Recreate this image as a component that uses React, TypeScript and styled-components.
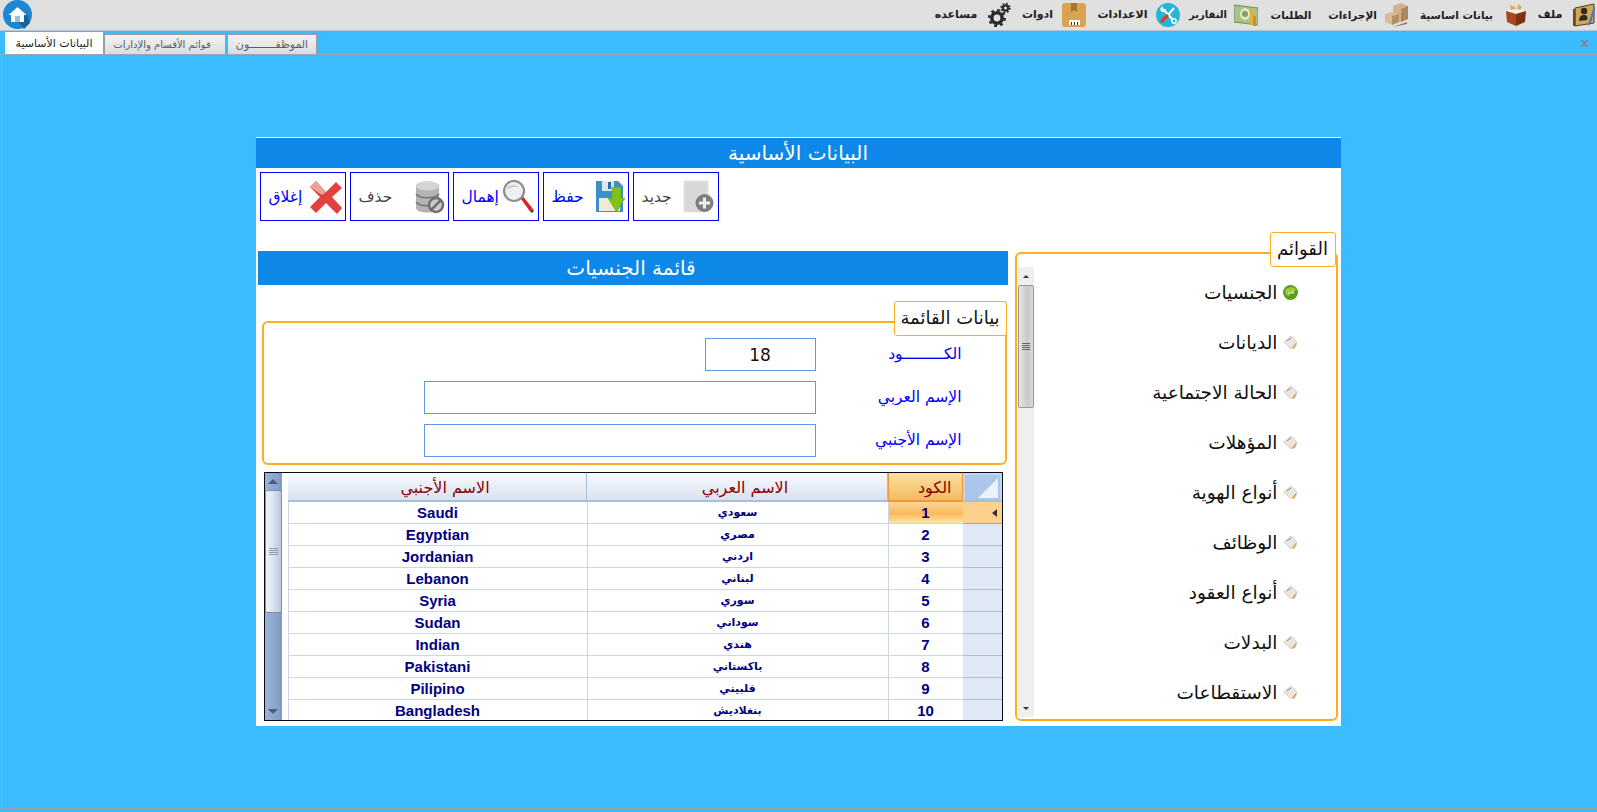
import React from 'react';
import styled, { createGlobalStyle } from 'styled-components';

const FONT = '"DejaVu Sans", "Noto Sans", sans-serif';

const GlobalStyle = createGlobalStyle`
  html, body {
    margin: 0;
    padding: 0;
    height: 100%;
    overflow: hidden;
    background: #3abcff;
    font-family: ${FONT};
  }
  * { box-sizing: border-box; }
`;

const Page = styled.div`
  width: 1597px;
  height: 812px;
  display: flex;
  flex-direction: column;
  background: #3abcff;
`;

const TopBar = styled.header`
  height: 31px;
  flex: none;
  display: flex;
  justify-content: space-between;
  align-items: center;
  padding: 0 2px 1px 3px;
  background: #e0e0e0;
  border-bottom: 1px solid #b9c6cf;
`;

const Menu = styled.nav`
  display: flex;
  direction: rtl;
  align-items: center;
`;

const MenuEntry = styled.div<{ $iconGap: number; $after: number }>`
  display: flex;
  align-items: center;
  gap: ${p => p.$iconGap}px;
  margin-left: ${p => p.$after}px;
`;

const MenuLabel = styled.span<{ $w: number; $size: number }>`
  width: ${p => p.$w}px;
  display: flex;
  justify-content: center;
  font-size: ${p => p.$size}px;
  font-weight: bold;
  color: #1c1c1c;
  white-space: nowrap;
`;

const TabRow = styled.div`
  height: 23px;
  flex: none;
  display: flex;
  align-items: flex-end;
  padding-left: 5px;
  gap: 1px;
`;

const Tab = styled.div<{ $active?: boolean; $w: number; $size: number; $pad?: number }>`
  width: ${p => p.$w}px;
  height: ${p => (p.$active ? 22 : 20)}px;
  display: flex;
  align-items: center;
  justify-content: center;
  padding-right: ${p => p.$pad ?? 0}px;
  font-size: ${p => p.$size}px;
  white-space: nowrap;
  color: ${p => (p.$active ? '#222' : '#5c5c5c')};
  background: ${p => (p.$active ? '#fff' : 'linear-gradient(#f2f2f6, #dcdce2)')};
  border: 1px solid ${p => (p.$active ? '#fff' : '#9a9aa2')};
  border-bottom: none;
`;

const CloseMark = styled.span`
  position: absolute;
  right: 8px;
  top: -19px;
  font-size: 13px;
  font-weight: bold;
  line-height: 14px;
  color: #7d8a96;
`;

const Frame = styled.main`
  position: relative;
  flex: none;
  height: 755px;
  margin-left: 1px;
  width: 1596px;
  display: flex;
  justify-content: center;
  padding-top: 82px;
  padding-right: 3px;
  border: 1px solid #9aa5ad;
  border-right: none;
`;

const Panel = styled.section`
  width: 1085px;
  height: 589px;
  background: #fff;
  display: flex;
  flex-direction: column;
  padding-top: 1px;
`;

const PanelTitle = styled.h1`
  margin: 0;
  height: 30px;
  flex: none;
  display: flex;
  align-items: center;
  justify-content: center;
  background: #0e88e8;
  color: #fff;
  font-size: 20px;
  font-weight: normal;
`;

const Toolbar = styled.div`
  display: flex;
  gap: 4px;
  padding: 4px 0 0 4px;
  flex: none;
`;

const ToolButton = styled.button<{ $w: number; $off?: boolean }>`
  width: ${p => p.$w}px;
  height: 49px;
  padding: 0 3px 0 8px;
  display: flex;
  align-items: center;
  justify-content: space-between;
  background: #fff;
  border: 1px solid #0000ff;
  font-family: ${FONT};
  font-size: 15.5px;
  font-weight: normal;
  color: ${p => (p.$off ? '#444' : '#0000ff')};
  white-space: nowrap;
`;

const Body = styled.div`
  display: flex;
  padding: 30px 3px 0 2px;
  gap: 7px;
`;

const LeftColumn = styled.div`
  width: 750px;
  display: flex;
  flex-direction: column;
`;

const SectionTitle = styled.h2`
  margin: 0;
  height: 34px;
  display: flex;
  align-items: center;
  justify-content: center;
  padding-right: 3px;
  background: #0e88e8;
  color: #fff;
  font-size: 20px;
  font-weight: normal;
`;

const GroupBox = styled.div`
  position: relative;
  border: 2px solid #ffae22;
  border-radius: 6px;
`;

const Legend = styled.div<{ $w: number; $right: number }>`
  position: absolute;
  top: -22px;
  right: ${p => p.$right}px;
  width: ${p => p.$w}px;
  height: 35px;
  display: flex;
  align-items: center;
  justify-content: center;
  padding-bottom: 2px;
  background: #fff;
  border: 1px solid #ffae22;
  border-radius: 3px;
  font-size: 18px;
  color: #111;
  white-space: nowrap;
`;

const FormBox = styled(GroupBox)`
  margin: 36px 1px 0 4px;
  height: 144px;
  direction: rtl;
  display: flex;
  flex-direction: column;
  gap: 10px;
  padding: 15px 43px 0 0;
`;

const FieldRow = styled.div`
  display: flex;
  align-items: center;
  height: 33px;
`;

const FieldLabel = styled.label`
  width: 146px;
  font-size: 15.5px;
  color: #0000ff;
  white-space: nowrap;
  margin-top: -2px;
`;

const FieldInput = styled.div<{ $w: number }>`
  width: ${p => p.$w}px;
  height: 33px;
  display: flex;
  align-items: center;
  justify-content: center;
  border: 1px solid #6495ed;
  font-size: 17px;
  color: #111;
`;

const Grid = styled.div`
  margin: 7px 5px 0 6px;
  height: 249px;
  border: 1px solid #0a0a14;
  display: flex;
  overflow: hidden;
  background: #fff;
`;

const GridScroll = styled.div`
  width: 17px;
  flex: none;
  display: flex;
  flex-direction: column;
  justify-content: space-between;
  background: linear-gradient(90deg, #9db4d6, #7f9ac3);
`;

const GridArrow = styled.div<{ $down?: boolean }>`
  height: 17px;
  flex: none;
  display: flex;
  align-items: center;
  justify-content: center;
  &::after {
    content: '';
    border-left: 5px solid transparent;
    border-right: 5px solid transparent;
    ${p => (p.$down ? 'border-top: 5px solid #4a5a80;' : 'border-bottom: 5px solid #4a5a80;')}
  }
`;

const GridThumb = styled.div`
  height: 123px;
  flex: none;
  display: flex;
  align-items: center;
  justify-content: center;
  background: linear-gradient(90deg, #eef1f7, #dfe5ef 45%, #b9c6da);
  border: 1px solid #7c8fb0;
  border-radius: 2px;
`;

const ScrollTop = styled.div`
  display: flex;
  flex-direction: column;
`;

const Grip = styled.div`
  width: 9px;
  height: 7px;
  background: repeating-linear-gradient(#8d9ab2 0 1px, transparent 1px 2px);
`;

const Gutter = styled.div`
  width: 6px;
  flex: none;
  background: #fff;
`;

const GridTable = styled.div`
  flex: 1;
  display: flex;
  flex-direction: column;
  min-width: 0;
`;

const GridRow = styled.div`
  display: grid;
  grid-template-columns: 299px 301px 75px 1fr;
  flex: none;
`;

const HeadCell = styled.div<{ $hot?: boolean }>`
  height: 29px;
  display: flex;
  align-items: flex-end;
  justify-content: ${p => (p.$hot ? 'flex-end' : 'center')};
  padding: 0 ${p => (p.$hot ? 10 : 0)}px 3px ${p => (p.$hot ? 0 : 17)}px;
  font-size: 16px;
  color: #8b0000;
  white-space: nowrap;
  background: ${p => (p.$hot ? 'linear-gradient(#fbdf9f, #f4bb61)' : 'linear-gradient(#f8fafd, #d9e2ef)')};
  border-right: 1px solid ${p => (p.$hot ? '#ef9a3a' : '#a9bfd8')};
  border-left: ${p => (p.$hot ? '1px solid #ef9a3a' : 'none')};
  border-bottom: 2px solid ${p => (p.$hot ? '#ef9a3a' : '#a9bfd8')};
`;

const CornerCell = styled.div`
  height: 29px;
  background: #aac6e8;
  border: 2px solid #c3d6ee;
  border-bottom-color: #a9bfd8;
  position: relative;
  overflow: hidden;
  &::after {
    content: '';
    position: absolute;
    right: 2px;
    bottom: 2px;
    border-left: 20px solid transparent;
    border-bottom: 20px solid #eef2f8;
  }
`;

const BodyCell = styled.div<{ $size?: number; $current?: boolean }>`
  height: 22px;
  display: flex;
  align-items: center;
  justify-content: center;
  font-size: ${p => p.$size ?? 15}px;
  font-weight: bold;
  font-family: ${p => (p.$size ? FONT : '"Liberation Sans", sans-serif')};
  color: #000080;
  border-left: 1px solid #cdd6e8;
  border-bottom: 1px solid #cdd6e8;
  background: ${p => (p.$current ? 'linear-gradient(#fbd79a, #fcb95c 55%, #fde3a8)' : '#fff')};
`;

const Indicator = styled.div<{ $current?: boolean }>`
  height: 22px;
  display: flex;
  align-items: center;
  justify-content: flex-end;
  padding-right: 5px;
  background: ${p => (p.$current ? '#fdd08c' : '#e1e8f5')};
  border-bottom: 1px solid ${p => (p.$current ? '#ef9a3a' : '#a9bfd8')};
  ${p => p.$current && `
    &::after {
      content: '';
      border-top: 4px solid transparent;
      border-bottom: 4px solid transparent;
      border-right: 5px solid #333;
    }
  `}
`;

const ListBox = styled(GroupBox)`
  width: 323px;
  height: 469px;
  margin-top: 1px;
  display: flex;
  padding: 13px 0 0 1px;
`;

const ListScroll = styled.div`
  width: 16px;
  height: 450px;
  flex: none;
  display: flex;
  flex-direction: column;
  justify-content: space-between;
  background: #efefef;
`;

const ListArrow = styled.div<{ $down?: boolean }>`
  height: 18px;
  flex: none;
  display: flex;
  align-items: center;
  justify-content: center;
  &::after {
    content: '';
    border-left: 3px solid transparent;
    border-right: 3px solid transparent;
    ${p => (p.$down ? 'border-top: 3px solid #333;' : 'border-bottom: 3px solid #333;')}
  }
`;

const ListThumb = styled.div`
  height: 123px;
  flex: none;
  display: flex;
  align-items: center;
  justify-content: center;
  background: linear-gradient(90deg, #e6e6e6, #c9c9c9 60%, #d9d9d9);
  border: 1px solid #9a9a9a;
  border-radius: 2px;
`;

const ListGrip = styled(Grip)`
  width: 8px;
  background: repeating-linear-gradient(#666 0 1px, transparent 1px 2px);
`;

const ListItems = styled.ul`
  list-style: none;
  margin: 0;
  padding: 0 38px 0 0;
  flex: 1;
  direction: rtl;
  display: flex;
  flex-direction: column;
`;

const ListItem = styled.li`
  height: 50px;
  display: flex;
  align-items: center;
  gap: 5px;
  font-size: 18.5px;
  color: #111;
  white-space: nowrap;
`;

const Svg = styled.svg`
  flex: none;
  display: block;
`;

const HomeIcon = () => (
  <Svg width="29" height="29" viewBox="0 0 29 29">
    <circle cx="14.5" cy="14.5" r="14.5" fill="#1f86d4" />
    <path d="M14 20l7 9 6-6-3-9z" fill="#17639f" />
    <path d="M14.5 7L5.5 15h2.5v7h13v-7h2.500z" fill="#fff" />
    <rect x="12" y="16" width="5" height="6" fill="#8fc4ea" />
  </Svg>
);

const AppIcon = () => (
  <Svg width="22" height="24" viewBox="0 0 22 24">
    <path d="M2 5L21 1v19L2 23z" fill="#d2a45c" stroke="#5a3a18" />
    <path d="M0 6h2.500v17H0z" fill="#6b4a22" />
    <circle cx="11" cy="8" r="3.200" fill="#33291c" />
    <path d="M6 18c0-4 2-6 5-6s4 2 3 5z" fill="#33291c" />
    <path d="M21 3l-5 16-1 4 2.500-2L22 6z" fill="#3d78d0" />
  </Svg>
);

const BasketIcon = () => (
  <Svg width="22" height="24" viewBox="0 0 22 24">
    <path d="M5 2l5 2 2 4H6z M13 1l4 3-3 4h-2z" fill="#d7ad5c" />
    <path d="M1 8l10 3 10-3-10-2z" fill="#f3eee4" />
    <path d="M1 8l10 3v12L2 19z" fill="#a8481c" />
    <path d="M21 8l-10 3v12l9-4z" fill="#7f3210" />
  </Svg>
);

const BoxesIcon = () => (
  <Svg width="25" height="24" viewBox="0 0 25 24">
    <path d="M9 3l8-3 7 3v13l-8 3-7-3z" fill="#d2b18b" />
    <path d="M17 6v13l7-3V3z" fill="#a98860" />
    <path d="M1 11l7-2 7 2v8l-7 3-7-3z" fill="#d8bb96" />
    <path d="M8 13v9l7-3v-8z" fill="#b0906a" />
    <path d="M2 21l7 3 14-5v2l-14 3z" fill="#8c7a66" />
  </Svg>
);

const MoneyIcon = () => (
  <Svg width="24" height="24" viewBox="0 0 24 24">
    <path d="M0 2l24 3v17L0 19z" fill="#a6c48a" stroke="#6e8f58" />
    <ellipse cx="11" cy="11" rx="5" ry="6" fill="#dfe9c8" />
    <circle cx="11" cy="11" r="3" fill="#7d9f63" />
    <rect x="16" y="6" width="4" height="16" fill="#e0b040" />
    <rect x="19" y="13" width="3" height="10" fill="#c8942c" />
  </Svg>
);

const ToolsIcon = () => (
  <Svg width="24" height="24" viewBox="0 0 24 24">
    <circle cx="12" cy="12" r="12" fill="#27b4d8" />
    <path d="M7 6l10 11" stroke="#fff" strokeWidth="2.200" />
    <path d="M4.500 7.500a3 3 0 0 1 3-4l-1 2 1.500 1.500 2-1a3 3 0 0 1-4 3z" fill="#fff" />
    <path d="M18 5l-6 7" stroke="#fff" strokeWidth="2" />
    <path d="M11 13l-5 5" stroke="#e23b2e" strokeWidth="3.200" strokeLinecap="round" />
    <circle cx="18" cy="18" r="2.200" fill="none" stroke="#fff" strokeWidth="1.500" />
  </Svg>
);

const PackageIcon = () => (
  <Svg width="24" height="24" viewBox="0 0 24 24">
    <rect width="24" height="24" rx="3" fill="#d9a354" />
    <path d="M9 0h6v9l-3-2-3 2z" fill="#a87632" />
    <rect x="7" y="17" width="11" height="5" fill="#fff" />
    <path d="M9 19h1v3H9zM12 19h1v3h-1zM15 19h1v3h-1z" fill="#333" />
  </Svg>
);

const GearsIcon = () => (
  <Svg width="23" height="25" viewBox="0 0 23 25" fill="none" stroke="#2b2b2b">
    <circle cx="9" cy="16" r="5.200" strokeWidth="3.600" />
    <circle cx="9" cy="16" r="7.800" strokeWidth="2.400" strokeDasharray="2.800 3.300" />
    <circle cx="17.500" cy="6" r="2.600" strokeWidth="2.200" />
    <circle cx="17.500" cy="6" r="4.400" strokeWidth="1.600" strokeDasharray="1.800 1.650" />
  </Svg>
);

const NewIcon = () => (
  <Svg width="32" height="33" viewBox="0 0 32 33">
    <rect x="1" y="1" width="24" height="31" fill="#d8d8d8" stroke="#e4e4e4" />
    <circle cx="21.500" cy="23" r="9" fill="#7f7f7f" />
    <path d="M21.500 17.500v11M16 23h11" stroke="#eee" strokeWidth="3" />
  </Svg>
);

const SaveIcon = () => (
  <Svg width="30" height="33" viewBox="0 0 30 33">
    <path d="M1 1h22l5 5v26H1z" fill="#3d8ec9" />
    <rect x="7" y="1" width="12" height="10" fill="#d8e8f2" />
    <rect x="13" y="2" width="3" height="7" fill="#2d6f9f" />
    <rect x="4" y="18" width="21" height="13" fill="#f1ead2" />
    <path d="M18 7h9v11h4L22.500 32 14 18h4z" transform="translate(-1 0)" fill="#7fc31c" stroke="#5d9e10" strokeWidth=".5" />
  </Svg>
);

const SearchIcon = () => (
  <Svg width="32" height="34" viewBox="0 0 32 34">
    <circle cx="11" cy="11" r="10" fill="#eef1f4" stroke="#8d8d8d" strokeWidth="2.200" />
    <path d="M3 10c2-5 9-6 13-3-5-1-9 0-13 3z" fill="#bfc6cc" />
    <path d="M18 19l2.500-2 9.500 12-3 2.500z" fill="#d9232a" />
    <path d="M27 31.500l3-2.500 1 2-2 2z" fill="#444" />
  </Svg>
);

const DatabaseIcon = () => (
  <Svg width="30" height="34" viewBox="0 0 30 34">
    <path d="M1 6c0-6 23-6 23 0v22c0 6-23 6-23 0z" fill="#b3b3b3" />
    <ellipse cx="12.500" cy="6" rx="11.500" ry="4.500" fill="#d4d4d4" />
    <path d="M1 14c3 5 20 5 23 0M1 22c3 5 20 5 23 0" fill="none" stroke="#777" strokeWidth="1.500" />
    <circle cx="21" cy="25" r="7" fill="#ccc" stroke="#6f6f6f" strokeWidth="2.500" />
    <path d="M16 30l10-10" stroke="#6f6f6f" strokeWidth="2.500" />
  </Svg>
);

const CrossIcon = () => (
  <Svg width="32" height="34" viewBox="0 0 32 34">
    <path d="M6 1l10 11L26 2l6 6-10 9 10 11-5 6-11-11L6 33l-6-6 10-10L0 7z" fill="#e23f40" />
    <path d="M6 1l10 11-4 3L0 7z" fill="#eaa397" />
  </Svg>
);

const GlobeIcon = () => (
  <Svg width="15" height="15" viewBox="0 0 15 15">
    <circle cx="7.500" cy="7.500" r="7.500" fill="#5d9e1c" />
    <path d="M2 5c3-3 8-4 11-1l-2 3-4 1-1 3-3-1z" fill="#9ccc3c" />
    <path d="M5 8h6l-2-2" stroke="#e6f2c6" fill="none" />
  </Svg>
);

const NoteIcon = () => (
  <Svg width="15" height="15" viewBox="0 0 15 15">
    <path d="M1 7l7-6 6 6-6 7z" fill="#e9e7df" stroke="#bdbdb2" strokeWidth=".7" />
    <path d="M4 6l4-3" stroke="#8d8d85" />
    <path d="M9 13l4-5 1 1-3 5z" fill="#d9a84e" />
  </Svg>
);

const menuEntries = [
  { icon: <AppIcon />, label: 'ملف', w: 24, size: 11, iconGap: 11, after: 11 },
  { icon: <BasketIcon />, label: 'بيانات اساسية', w: 73, size: 10.5, iconGap: 12, after: 11 },
  { icon: <BoxesIcon />, label: 'الإجراءات', w: 47, size: 10.5, iconGap: 8, after: 18 },
  { label: 'الطلبات', w: 40, size: 10.500, iconGap: 0, after: 13 },
  { icon: <MoneyIcon />, label: 'التقارير', w: 34, size: 10, iconGap: 9, after: 11 },
  { icon: <ToolsIcon />, label: 'الاعدادات', w: 51, size: 11, iconGap: 8, after: 11 },
  { icon: <PackageIcon />, label: 'ادوات', w: 31, size: 11, iconGap: 9, after: 11 },
  { icon: <GearsIcon />, label: 'مساعده', w: 40, size: 11, iconGap: 12, after: 0 },
];

const listItems = [
  'الجنسيات',
  'الديانات',
  'الحالة الاجتماعية',
  'المؤهلات',
  'أنواع الهوية',
  'الوظائف',
  'أنواع العقود',
  'البدلات',
  'الاستقطاعات',
];

const nationalities = [
  ['Saudi', 'سعودي'],
  ['Egyptian', 'مصري'],
  ['Jordanian', 'اردني'],
  ['Lebanon', 'لبناني'],
  ['Syria', 'سوري'],
  ['Sudan', 'سوداني'],
  ['Indian', 'هندي'],
  ['Pakistani', 'باكستاني'],
  ['Pilipino', 'فلبيني'],
  ['Bangladesh', 'بنغلاديش'],
];

const App = () => (
  <Page>
    <GlobalStyle />
    <TopBar>
      <HomeIcon />
      <Menu>
        {menuEntries.map(entry => (
          <MenuEntry key={entry.label} $iconGap={entry.iconGap} $after={entry.after}>
            {entry.icon}
            <MenuLabel $w={entry.w} $size={entry.size}>{entry.label}</MenuLabel>
          </MenuEntry>
        ))}
      </Menu>
    </TopBar>
    <TabRow>
      <Tab $active $w={98} $size={11}>البيانات الأساسية</Tab>
      <Tab $w={122} $size={10} $pad={6}>قوائم الأقسام والإدارات</Tab>
      <Tab $w={90} $size={11}>الموظفــــــــون</Tab>
    </TabRow>
    <Frame>
      <CloseMark>x</CloseMark>
      <Panel>
        <PanelTitle>البيانات الأساسية</PanelTitle>
        <Toolbar>
          <ToolButton $w={86}>إغلاق<CrossIcon /></ToolButton>
          <ToolButton $w={99} $off>حذف<DatabaseIcon /></ToolButton>
          <ToolButton $w={86}>إهمال<SearchIcon /></ToolButton>
          <ToolButton $w={86}>حفظ<SaveIcon /></ToolButton>
          <ToolButton $w={86} $off>جديد<NewIcon /></ToolButton>
        </Toolbar>
        <Body>
          <LeftColumn>
            <SectionTitle>قائمة الجنسيات</SectionTitle>
            <FormBox>
              <Legend $w={113} $right={-2}>بيانات القائمة</Legend>
              <FieldRow>
                <FieldLabel>الكـــــــــود</FieldLabel>
                <FieldInput $w={111}>18</FieldInput>
              </FieldRow>
              <FieldRow>
                <FieldLabel>الإسم العربي</FieldLabel>
                <FieldInput $w={392} />
              </FieldRow>
              <FieldRow>
                <FieldLabel>الإسم الأجنبي</FieldLabel>
                <FieldInput $w={392} />
              </FieldRow>
            </FormBox>
            <Grid>
              <GridScroll>
                <ScrollTop>
                  <GridArrow />
                  <GridThumb><Grip /></GridThumb>
                </ScrollTop>
                <GridArrow $down />
              </GridScroll>
              <Gutter />
              <GridTable>
                <GridRow>
                  <HeadCell>الاسم الأجنبي</HeadCell>
                  <HeadCell>الاسم العربي</HeadCell>
                  <HeadCell $hot>الكود</HeadCell>
                  <CornerCell />
                </GridRow>
                {nationalities.map(([foreign, arabic], i) => (
                  <GridRow key={foreign}>
                    <BodyCell>{foreign}</BodyCell>
                    <BodyCell $size={11}>{arabic}</BodyCell>
                    <BodyCell $current={i === 0}>{i + 1}</BodyCell>
                    <Indicator $current={i === 0} />
                  </GridRow>
                ))}
              </GridTable>
            </Grid>
          </LeftColumn>
          <ListBox>
            <Legend $w={66} $right={0}>القوائم</Legend>
            <ListScroll>
              <ScrollTop>
                <ListArrow />
                <ListThumb><ListGrip /></ListThumb>
              </ScrollTop>
              <ListArrow $down />
            </ListScroll>
            <ListItems>
              {listItems.map((item, i) => (
                <ListItem key={item}>
                  {i === 0 ? <GlobeIcon /> : <NoteIcon />}
                  {item}
                </ListItem>
              ))}
            </ListItems>
          </ListBox>
        </Body>
      </Panel>
    </Frame>
  </Page>
);

export default App;
